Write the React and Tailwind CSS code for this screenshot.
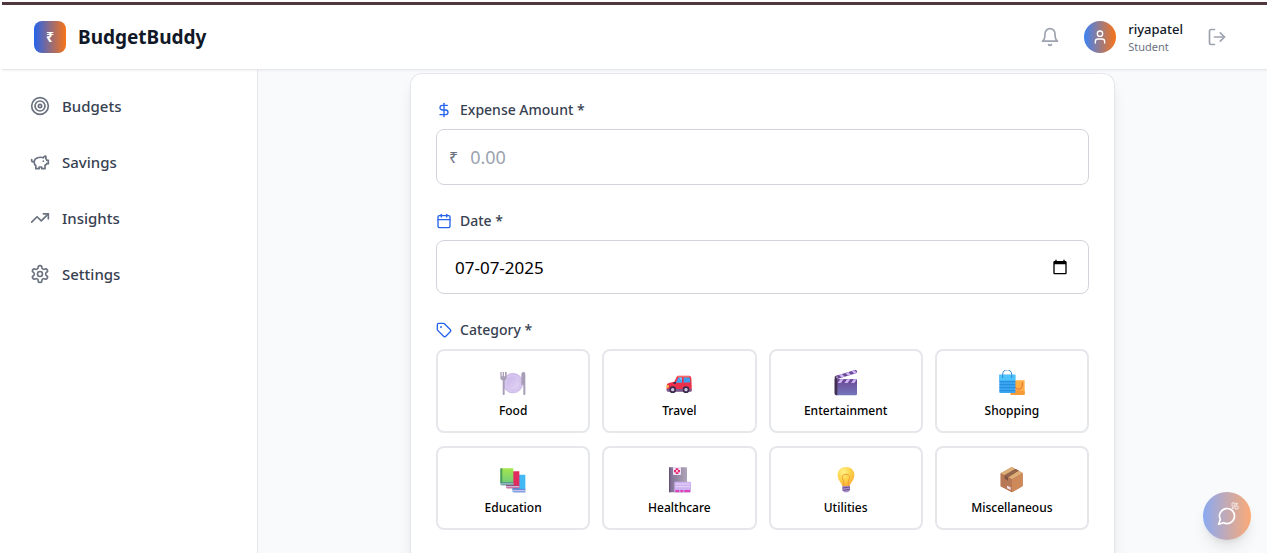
import React, { useState } from 'react';

function Icon({ size = 20, className = '', children }) {
  return (
    <svg
      width={size}
      height={size}
      viewBox="0 0 24 24"
      fill="none"
      stroke="currentColor"
      strokeWidth="2"
      strokeLinecap="round"
      strokeLinejoin="round"
      aria-hidden="true"
      className={`shrink-0 ${className}`}
    >
      {children}
    </svg>
  );
}

const glyphs = {
  bell: (
    <>
      <path d="M6 8a6 6 0 0 1 12 0c0 7 3 9 3 9H3s3-2 3-9" />
      <path d="M10.3 21a1.94 1.94 0 0 0 3.4 0" />
    </>
  ),
  user: (
    <>
      <path d="M19 21v-2a4 4 0 0 0-4-4H9a4 4 0 0 0-4 4v2" />
      <circle cx="12" cy="7" r="4" />
    </>
  ),
  logout: (
    <>
      <path d="M9 21H5a2 2 0 0 1-2-2V5a2 2 0 0 1 2-2h4" />
      <polyline points="16 17 21 12 16 7" />
      <line x1="21" x2="9" y1="12" y2="12" />
    </>
  ),
  target: (
    <>
      <circle cx="12" cy="12" r="10" />
      <circle cx="12" cy="12" r="6" />
      <circle cx="12" cy="12" r="2" />
    </>
  ),
  piggy: (
    <>
      <path d="M19 5c-1.5 0-2.8 1.4-3 2-3.5-1.5-11-.3-11 5 0 1.8 0 3 2 4.5V20h4v-2h3v2h4v-4c1-.5 1.7-1 2-2h2v-4h-2c0-1-.5-1.5-1-2V5z" />
      <path d="M2 9v1c0 1.1.9 2 2 2h1" />
      <path d="M16 11h.01" />
    </>
  ),
  trending: (
    <>
      <polyline points="22 7 13.5 15.5 8.5 10.5 2 17" />
      <polyline points="16 7 22 7 22 13" />
    </>
  ),
  settings: (
    <>
      <path d="M12.22 2h-.44a2 2 0 0 0-2 2v.18a2 2 0 0 1-1 1.73l-.43.25a2 2 0 0 1-2 0l-.15-.08a2 2 0 0 0-2.73.73l-.22.38a2 2 0 0 0 .73 2.73l.15.1a2 2 0 0 1 1 1.72v.51a2 2 0 0 1-1 1.74l-.15.09a2 2 0 0 0-.73 2.73l.22.38a2 2 0 0 0 2.73.73l.15-.08a2 2 0 0 1 2 0l.43.25a2 2 0 0 1 1 1.73V20a2 2 0 0 0 2 2h.44a2 2 0 0 0 2-2v-.18a2 2 0 0 1 1-1.73l.43-.25a2 2 0 0 1 2 0l.15.08a2 2 0 0 0 2.73-.73l.22-.39a2 2 0 0 0-.73-2.73l-.15-.08a2 2 0 0 1-1-1.74v-.5a2 2 0 0 1 1-1.74l.15-.09a2 2 0 0 0 .73-2.73l-.22-.38a2 2 0 0 0-2.73-.73l-.15.08a2 2 0 0 1-2 0l-.43-.25a2 2 0 0 1-1-1.73V4a2 2 0 0 0-2-2z" />
      <circle cx="12" cy="12" r="3" />
    </>
  ),
  dollar: (
    <>
      <line x1="12" x2="12" y1="2" y2="22" />
      <path d="M17 5H9.5a3.5 3.5 0 0 0 0 7h5a3.5 3.5 0 0 1 0 7H6" />
    </>
  ),
  calendar: (
    <>
      <path d="M8 2v4" />
      <path d="M16 2v4" />
      <rect width="18" height="18" x="3" y="4" rx="2" />
      <path d="M3 10h18" />
    </>
  ),
  tag: (
    <>
      <path d="M12.586 2.586A2 2 0 0 0 11.172 2H4a2 2 0 0 0-2 2v7.172a2 2 0 0 0 .586 1.414l8.704 8.704a2.426 2.426 0 0 0 3.42 0l6.58-6.58a2.426 2.426 0 0 0 0-3.42z" />
      <circle cx="7.5" cy="7.5" r=".5" fill="currentColor" />
    </>
  ),
  message: <path d="M7.9 20A9 9 0 1 0 4 16.1L2 22Z" />,
};

/* Category pictures, each on a 78 x 78 grid. */
function Picture({ children }) {
  return (
    <svg width="26" height="26" viewBox="0 0 78 78" aria-hidden="true">
      {children}
    </svg>
  );
}

const pictures = {
  Food: (
    <Picture>
      <defs>
        <linearGradient id="plate" x1="0" y1="0" x2="1" y2="1">
          <stop offset="0" stopColor="#c9b4e8" />
          <stop offset="1" stopColor="#e2d6f5" />
        </linearGradient>
      </defs>
      <circle cx="39" cy="39" r="30" fill="#d6c6ef" />
      <circle cx="39" cy="40" r="29" fill="none" stroke="#c5b0e2" strokeWidth="2" />
      <circle cx="39" cy="38" r="19" fill="url(#plate)" />
      <path d="M1 6h4v13h3V6h4v13h3V6h5v17c0 5-3 7-6 8v41c0 4-6 4-6 0V31c-4-1-7-3-7-8z" fill="#a9a0b8" />
      <path d="M64 13c0-5 4-7 7-7 4 0 5 3 5 8v58c0 4-6 4-6 0V44h-6z" fill="#a79db6" />
    </Picture>
  ),
  Travel: (
    <Picture>
      <path d="M2 48c0-6 3-9 9-10l14-3 7-14c1-3 3-4 6-4h31c5 0 6 3 7 8l1 20v14c0 4-2 5-5 5H7c-4 0-5-2-5-6z" fill="#ec2f4b" />
      <path d="M30 37l6-12c1-2 2-3 4-3h8v16H31z" fill="#42a5ee" />
      <path d="M53 22h15c3 0 3 2 4 5l1 10-20 1z" fill="#3f9cec" />
      <path d="M39 23h8v8z" fill="#8ed1ff" />
      <path d="M35 18h34l3 4H34z" fill="#ff6b62" />
      <path d="M2 57h75v5c0 2-2 3-5 3H6c-3 0-4-2-4-5z" fill="#7a5b91" />
      <circle cx="20" cy="59" r="10" fill="#3b2b4d" />
      <circle cx="60" cy="59" r="10" fill="#3b2b4d" />
      <circle cx="20" cy="59" r="5" fill="#d7c5e9" />
      <circle cx="60" cy="59" r="5" fill="#d7c5e9" />
      <path d="M2 46h5c2 0 2 5 0 7H1z" fill="#ffd34c" />
      <rect x="22" y="36" width="8" height="6" rx="2" fill="#422c4f" />
    </Picture>
  ),
  Entertainment: (
    <Picture>
      <defs>
        <linearGradient id="slate" x1="0" y1="0" x2="0" y2="1">
          <stop offset="0" stopColor="#6b4a94" />
          <stop offset="1" stopColor="#7476bd" />
        </linearGradient>
      </defs>
      <path d="M7 18L66 0c3-1 5 1 6 4s0 5-3 6L13 27z" fill="#6c4799" />
      <path d="M18 15l9-3 8 8-9 3zM37 9l9-3 8 8-9 3zM56 3l8-2 8 7-9 3z" fill="#cbb5f1" />
      <path d="M5 28h67v43c0 3-2 5-5 5H11c-4 0-6-2-6-6z" fill="url(#slate)" />
      <path d="M5 20l8-4v60H11c-4 0-6-2-6-6z" fill="#423052" />
      <path d="M14 28h58v11H14z" fill="#6c4799" />
      <path d="M22 28h10l-8 11H14zM42 28h10l-8 11H34zM62 28h10l-8 11H54z" fill="#cbb5f1" />
      <circle cx="12" cy="22" r="3" fill="#aaa0c0" />
    </Picture>
  ),
  Shopping: (
    <Picture>
      <path d="M35 31h42v40c0 2-1 4-4 4H35z" fill="#ffb044" />
      <path d="M35 62h42v9c0 2-1 4-4 4H35z" fill="#f79c38" />
      <path d="M47 37v8c0 17 23 17 23 0v-8" fill="none" stroke="#e56a43" strokeWidth="3" />
      <path d="M1 14h48v55H5c-3 0-4-2-4-4z" fill="#3aa6f2" />
      <path d="M1 14h48v18H1z" fill="#4cc3fb" />
      <path d="M1 35h48M1 44h48M1 53h48M1 62h48" stroke="#1c7cd2" strokeWidth="2" />
      <path d="M11 24V13C11-5 38-5 38 13v11" fill="none" stroke="#3188d8" strokeWidth="3" />
    </Picture>
  ),
  Education: (
    <Picture>
      <defs>
        <linearGradient id="book" x1="0" y1="0" x2="0" y2="1">
          <stop offset="0" stopColor="#a5e64e" />
          <stop offset="1" stopColor="#69c97e" />
        </linearGradient>
      </defs>
      <path d="M37 26c0-2 1-3 3-3h36v52H41c-3 0-4-2-4-4z" fill="#42b9f4" />
      <path d="M38 67h38v7H40c-4 0-4-6-2-7z" fill="#c3c2ee" />
      <path d="M38 67h38M40 75h36" stroke="#4265c2" strokeWidth="2" />
      <path d="M18 17c0-3 1-4 3-4h37v50H21c-2 0-3-2-3-4z" fill="#e02c5e" />
      <path d="M20 56h38v6H21c-4 0-4-5-1-6z" fill="#d8c3e9" />
      <path d="M19 56h39M20 63h38" stroke="#a62a66" strokeWidth="2" />
      <path d="M1 8c0-3 1-4 4-4h35v50H5c-3 0-4-1-4-4z" fill="url(#book)" />
      <path d="M1 8c0-3 1-4 4-4h2v43H1z" fill="#4d9f5c" />
      <path d="M3 47h37v6H4c-4 0-4-5-1-6z" fill="#9bb8cc" />
      <path d="M2 47h38M4 54h36" stroke="#467f83" strokeWidth="2" />
    </Picture>
  ),
  Healthcare: (
    <Picture>
      <defs>
        <linearGradient id="tower" x1="0" y1="0" x2="1" y2="0">
          <stop offset="0" stopColor="#7e6d91" />
          <stop offset="1" stopColor="#afa5b9" />
        </linearGradient>
      </defs>
      <path d="M9 5c0-3 1-4 4-4h46c3 0 4 1 4 4v71H9z" fill="url(#tower)" />
      <path d="M9 5c0-3 1-4 4-4v75H9z" fill="#695579" />
      <rect x="21" y="0" width="24" height="24" rx="2" fill="#eee2f8" />
      <path d="M29 4h8v5h5v7h-5v5h-8v-5h-5V9h5z" fill="#e92d72" />
      <path d="M31 9h4v7h-4z" fill="#fff" />
      <path d="M25 47c0-2 1-3 3-3h43c3 0 4 1 4 3v29H25z" fill="#cdb2ef" />
      <path d="M28 51h44M28 59h44" stroke="#e6d5fa" strokeWidth="3" />
      <path d="M28 69h12v7H28zM43 69h9v7h-9zM55 69h17v7H55z" fill="#dc43bb" />
    </Picture>
  ),
  Utilities: (
    <Picture>
      <defs>
        <radialGradient id="bulb" cx=".35" cy=".25" r=".8">
          <stop offset="0" stopColor="#fff188" />
          <stop offset=".5" stopColor="#ffd44c" />
          <stop offset="1" stopColor="#f9ad36" />
        </radialGradient>
      </defs>
      <path d="M39 0c15 0 25 10 25 24 0 17-12 22-14 34H28C26 46 14 41 14 24 14 10 24 0 39 0z" fill="url(#bulb)" />
      <path d="M32 57V44l-4-12c-3-13 25-13 22 0l-4 12v13" fill="none" stroke="#f0a136" strokeWidth="3" />
      <path d="M28 57h23v11c0 4-5 8-11 8s-12-4-12-8z" fill="#a98cc6" />
      <path d="M28 63l23-3M29 70l22-3" stroke="#6e5193" strokeWidth="3" />
    </Picture>
  ),
  Miscellaneous: (
    <Picture>
      <path d="M38 0l33 18v39L39 76 5 58V19z" fill="#bd7c56" />
      <path d="M38 0l33 18-32 19L5 19z" fill="#ddae78" />
      <path d="M71 18v39L39 76V37z" fill="#cd8959" />
      <path d="M5 19l34 18v39L5 58z" fill="#b87755" />
      <path d="M49 6l10 5-32 20v10l-10-6V25z" fill="#80553f" />
      <path d="M49 6l10 5-32 20-10-6z" fill="#95644c" />
      <path d="M24 56l11 5v8l-11-5z" fill="#efdfe6" />
    </Picture>
  ),
};

const links = [
  ['Budgets', glyphs.target],
  ['Savings', glyphs.piggy],
  ['Insights', glyphs.trending],
  ['Settings', glyphs.settings],
];

function FieldLabel({ as: Tag = 'label', icon, children, ...rest }) {
  return (
    <Tag {...rest} className="mb-2 flex items-center gap-2 text-sm leading-[22px] font-medium text-[#374151]">
      <Icon size={16} className="text-[#2563eb]">{icon}</Icon>
      {children}
    </Tag>
  );
}

export default function App() {
  const [amount, setAmount] = useState('');
  const [date, setDate] = useState('07-07-2025');
  const [category, setCategory] = useState(null);

  return (
    <div className="h-screen bg-white p-[2px] font-['Noto_Sans','Open_Sans',sans-serif] text-[#111827]">
      <div className="relative flex h-full flex-col overflow-hidden border-t-[3px] border-[#50363d] bg-[#f9fafb]">
        <header className="z-10 flex shrink-0 items-center justify-between border-b border-[#e5e7eb] bg-white px-8 py-4 shadow-[0_1px_2px_rgba(0,0,0,0.05)]">
          <div className="flex items-center gap-3">
            <div className="flex size-8 items-center justify-center rounded-lg bg-linear-to-r/srgb from-[#2563eb] to-[#f97316] text-sm font-bold text-white">
              ₹
            </div>
            <h1 className="text-[19px] leading-8 font-bold">BudgetBuddy</h1>
          </div>
          <div className="flex items-center gap-4">
            <button type="button" aria-label="Notifications" className="px-2 text-[#9ca3af]">
              <Icon>{glyphs.bell}</Icon>
            </button>
            <div className="flex h-8 items-center gap-3">
              <div className="flex size-8 items-center justify-center rounded-full bg-linear-to-r/srgb from-[#3b82f6] to-[#f97316] text-white">
                <Icon size={16}>{glyphs.user}</Icon>
              </div>
              <div>
                <p className="text-[13px] leading-5 font-medium">riyapatel</p>
                <p className="text-[11px] leading-4 text-[#6b7280]">Student</p>
              </div>
            </div>
            <button type="button" aria-label="Log out" className="px-2 text-[#9ca3af]">
              <Icon>{glyphs.logout}</Icon>
            </button>
          </div>
        </header>

        <div className="flex min-h-0 flex-1">
          <nav className="w-64 shrink-0 border-r border-[#e5e7eb] bg-white px-4 py-3">
            <ul className="flex flex-col gap-2">
              {links.map(([name, icon]) => (
                <li key={name}>
                  <a href={`#${name.toLowerCase()}`} className="flex items-center gap-3 rounded-lg px-3 py-3 text-[15px] leading-6 font-medium text-[#374151]">
                    <Icon className="text-[#6b7280]">{icon}</Icon>
                    {name}
                  </a>
                </li>
              ))}
            </ul>
          </nav>

          <main className="min-w-0 flex-1 overflow-hidden px-8 pt-[3px]">
            <form className="mx-auto flex min-h-full w-full max-w-[705px] flex-col gap-[25px] rounded-t-xl border border-b-0 border-[#e5e7eb] bg-white p-[25px] shadow-lg">
              <div>
                <FieldLabel htmlFor="amount" icon={glyphs.dollar}>Expense Amount *</FieldLabel>
                <div className="flex h-14 items-center gap-3 rounded-lg border border-[#d1d5db] px-3">
                  <span className="text-base text-[#6b7280]">₹</span>
                  <input
                    id="amount"
                    inputMode="decimal"
                    placeholder="0.00"
                    value={amount}
                    onChange={(e) => setAmount(e.target.value)}
                    className="h-full min-w-0 flex-1 text-lg outline-none placeholder:text-[#9ca3af]"
                  />
                </div>
              </div>

              <div>
                <FieldLabel htmlFor="date" icon={glyphs.calendar}>Date *</FieldLabel>
                <div className="flex h-[54px] items-center rounded-lg border border-[#d1d5db] px-[18px]">
                  <input
                    id="date"
                    value={date}
                    onChange={(e) => setDate(e.target.value)}
                    className="h-full min-w-0 flex-1 text-[17px] text-black outline-none"
                  />
                  <button type="button" aria-label="Open calendar" className="px-0.5 text-black">
                    <svg width="16" height="16" viewBox="0 0 24 24" fill="currentColor" aria-hidden="true">
                      <path d="M20 3h-1V1h-2v2H7V1H5v2H4c-1.1 0-2 .9-2 2v16c0 1.1.9 2 2 2h16c1.1 0 2-.9 2-2V5c0-1.1-.9-2-2-2zm0 18H4V8h16v13z" />
                    </svg>
                  </button>
                </div>
              </div>

              <div role="group" aria-labelledby="category">
                <FieldLabel as="p" id="category" icon={glyphs.tag}>Category *</FieldLabel>
                <div className="grid grid-cols-4 gap-x-3 gap-y-[13px]">
                  {Object.entries(pictures).map(([name, picture]) => (
                    <button
                      key={name}
                      type="button"
                      aria-pressed={category === name}
                      onClick={() => setCategory(name)}
                      className="flex flex-col items-center rounded-lg border-2 border-[#e5e7eb] px-4 pt-4 pb-3 text-black aria-pressed:border-[#3b82f6]"
                    >
                      <span className="flex h-8 items-center">{picture}</span>
                      <span className="mt-1 text-xs leading-4 font-medium">{name}</span>
                    </button>
                  ))}
                </div>
              </div>
            </form>
          </main>
        </div>

        <button
          type="button"
          aria-label="Open chat"
          className="absolute right-4 bottom-[13px] z-20 flex size-12 items-center justify-center rounded-full bg-linear-to-r/srgb from-[#8aa9f2] to-[#fcaa74] text-white shadow-lg"
        >
          <Icon>{glyphs.message}</Icon>
          <svg width="8" height="8" viewBox="0 0 24 24" fill="none" stroke="currentColor" strokeWidth="3" aria-hidden="true" className="absolute top-[10px] right-3 opacity-70">
            <path d="M3 3h9v9H3zM12 12h9v9h-9zM17 2v7M14 5h7M5 15v6M2 18h7" />
          </svg>
        </button>
      </div>
    </div>
  );
}
